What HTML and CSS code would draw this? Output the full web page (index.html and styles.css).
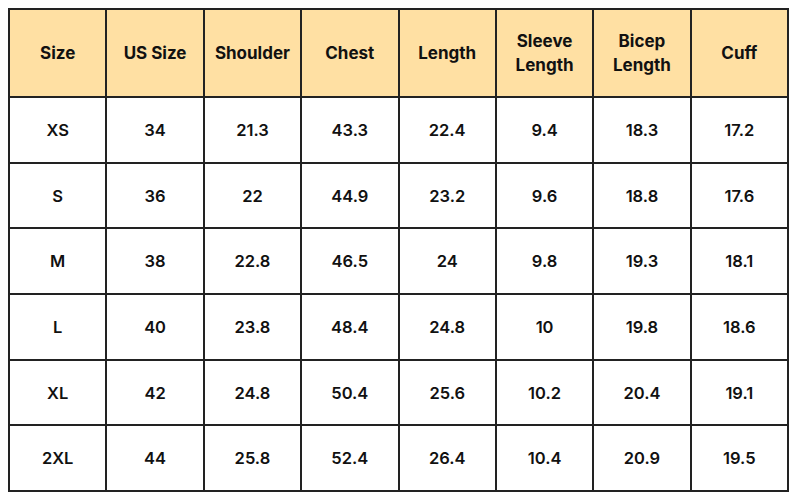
FILE: index.html
```html
<!DOCTYPE html>
<html>
<head>
<meta charset="utf-8">
<link rel="stylesheet" href="styles.css">
</head>
<body>
<table class="chart">
<thead>
<tr class="head">
<th>Size</th><th>US Size</th><th>Shoulder</th><th>Chest</th><th>Length</th><th>Sleeve<br>Length</th><th>Bicep<br>Length</th><th>Cuff</th>
</tr>
</thead>
<tbody>
<tr><td>XS</td><td>34</td><td>21.3</td><td>43.3</td><td>22.4</td><td>9.4</td><td>18.3</td><td>17.2</td></tr>
<tr><td>S</td><td>36</td><td>22</td><td>44.9</td><td>23.2</td><td>9.6</td><td>18.8</td><td>17.6</td></tr>
<tr><td>M</td><td>38</td><td>22.8</td><td>46.5</td><td>24</td><td>9.8</td><td>19.3</td><td>18.1</td></tr>
<tr><td>L</td><td>40</td><td>23.8</td><td>48.4</td><td>24.8</td><td>10</td><td>19.8</td><td>18.6</td></tr>
<tr><td>XL</td><td>42</td><td>24.8</td><td>50.4</td><td>25.6</td><td>10.2</td><td>20.4</td><td>19.1</td></tr>
<tr><td>2XL</td><td>44</td><td>25.8</td><td>52.4</td><td>26.4</td><td>10.4</td><td>20.9</td><td>19.5</td></tr>
</tbody>
</table>
</body>
</html>
```
FILE: styles.css
```css
html, body { background: #ffffff; }
body {
  margin: 8px;
  font-family: "Inter", "Open Sans", sans-serif;
  color: #111111;
}
.chart {
  border-collapse: collapse;
  width: 781px;
  table-layout: fixed;
  border: 2px solid #222222;
}
.chart th, .chart td {
  border: 2px solid #222222;
  text-align: center;
  vertical-align: middle;
  padding: 0;
  font-size: 16.5px;
  font-weight: 600;
  line-height: 24px;
}
.chart th {
  background: #ffe0a3;
  font-size: 17px;
  font-weight: 700;
}
.head { height: 88px; }
.chart tbody tr { height: 65.7px; }
```
